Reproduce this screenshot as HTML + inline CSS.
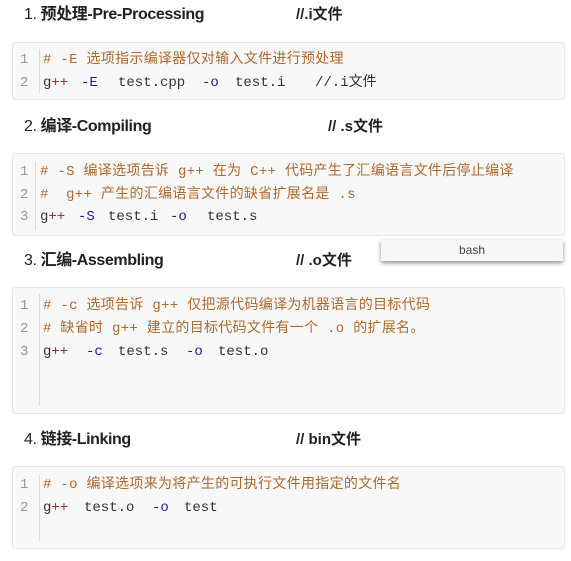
<!DOCTYPE html>
<html><head><meta charset="utf-8"><style>
body{margin:0;width:571px;height:561px;background:#fff;position:relative;overflow:hidden;font-family:"Liberation Sans","Noto Sans CJK SC",sans-serif}
.h{position:absolute;left:24px;font-size:16px;color:#222;line-height:20px;letter-spacing:-0.4px}
.h b{font-weight:bold}
.c{position:absolute;font-size:15px;font-weight:bold;color:#222;line-height:20px}
.blk{position:absolute;left:12px;width:551px;background:#f8f8f8;border:1px solid #e8e8e8;border-radius:3px}
.g{position:absolute;left:26px;width:1px;background:#ddd}
.n,.t{position:absolute;font-family:"Liberation Mono","Noto Sans CJK SC",monospace;font-size:14px;line-height:18px;white-space:pre}
.n{left:7px;color:#999}
.cm{color:#b0692e;letter-spacing:0.3px}
.k{color:#1d1d9a}
.d{color:#333}
.r{color:#a03030}
.bash{position:absolute;left:381px;top:240px;width:182px;height:21px;background:#f7f7f7;box-shadow:0 2px 4px rgba(0,0,0,.45);font-family:"Liberation Sans",sans-serif;font-size:12px;color:#444;text-align:center;line-height:20px}
</style></head><body>
<div class="h" style="top:5px">1. <b>预处理-Pre-Processing</b></div>
<div class="c" style="left:296px;top:5px">//.i文件</div>
<div class="blk" style="top:42px;height:56px">
<div class="g" style="top:6px;height:44px"></div>
<div class="n" style="top:8px">1</div><div class="t cm" style="left:30px;top:8px"># -E 选项指示编译器仅对输入文件进行预处理</div>
<div class="n" style="top:31px">2</div>
<div class="t d" style="left:30px;top:31px">g<span class="r">++</span></div><div class="t k" style="left:68px;top:31px">-E</div><div class="t d" style="left:105px;top:31px">test.cpp</div><div class="t k" style="left:189px;top:31px">-o</div><div class="t d" style="left:222px;top:31px">test.i</div><div class="t d" style="left:302px;top:31px">//.i文件</div>
</div>

<div class="h" style="top:117px">2. <b>编译-Compiling</b></div>
<div class="c" style="left:328px;top:117px">// .s文件</div>
<div class="blk" style="top:153px;height:81px">
<div class="g" style="top:8px;height:68px;left:22px"></div>
<div class="n" style="top:9px">1</div><div class="t cm" style="left:27px;top:9px"># -S 编译选项告诉 g++ 在为 C++ 代码产生了汇编语言文件后停止编译</div>
<div class="n" style="top:32px">2</div><div class="t cm" style="left:27px;top:32px">#  g++ 产生的汇编语言文件的缺省扩展名是 .s</div>
<div class="n" style="top:54px">3</div>
<div class="t d" style="left:27px;top:54px">g<span class="r">++</span></div><div class="t k" style="left:65px;top:54px">-S</div><div class="t d" style="left:95px;top:54px">test.i</div><div class="t k" style="left:157px;top:54px">-o</div><div class="t d" style="left:194px;top:54px">test.s</div>
</div>

<div class="h" style="top:251px">3. <b>汇编-Assembling</b></div>
<div class="c" style="left:296px;top:251px">// .o文件</div>
<div class="bash">bash</div>
<div class="blk" style="top:287px;height:125px">
<div class="g" style="top:6px;height:112px"></div>
<div class="n" style="top:9px">1</div><div class="t cm" style="left:30px;top:9px"># -c 选项告诉 g++ 仅把源代码编译为机器语言的目标代码</div>
<div class="n" style="top:32px">2</div><div class="t cm" style="left:30px;top:32px"># 缺省时 g++ 建立的目标代码文件有一个 .o 的扩展名。</div>
<div class="n" style="top:55px">3</div>
<div class="t d" style="left:30px;top:55px">g<span class="r">++</span></div><div class="t k" style="left:73px;top:55px">-c</div><div class="t d" style="left:105px;top:55px">test.s</div><div class="t k" style="left:173px;top:55px">-o</div><div class="t d" style="left:205px;top:55px">test.o</div>
</div>

<div class="h" style="top:430px">4. <b>链接-Linking</b></div>
<div class="c" style="left:296px;top:430px">// bin文件</div>
<div class="blk" style="top:466px;height:81px">
<div class="g" style="top:8px;height:66px"></div>
<div class="n" style="top:9px">1</div><div class="t cm" style="left:30px;top:9px"># -o 编译选项来为将产生的可执行文件用指定的文件名</div>
<div class="n" style="top:32px">2</div>
<div class="t d" style="left:30px;top:32px">g<span class="r">++</span></div><div class="t d" style="left:71px;top:32px">test.o</div><div class="t k" style="left:139px;top:32px">-o</div><div class="t d" style="left:171px;top:32px">test</div>
</div>
</body></html>
